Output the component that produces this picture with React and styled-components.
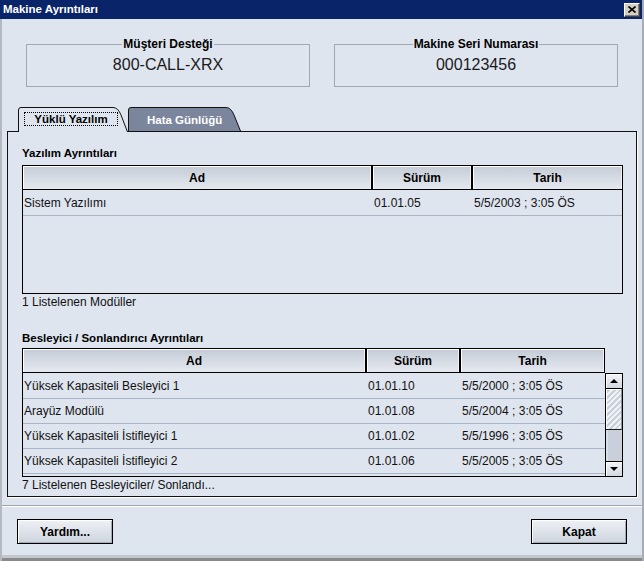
import React from "react";
import styled, { createGlobalStyle } from "styled-components";

const BG = "#dfe5ef";
const FONT = `"Liberation Sans", Arial, sans-serif`;

const GlobalStyle = createGlobalStyle`
  html, body {
    margin: 0;
    padding: 0;
    background: ${BG};
  }
  body {
    font-family: ${FONT};
    color: #000;
  }
`;

const Window = styled.div`
  width: 644px;
  height: 561px;
  box-sizing: border-box;
  display: flex;
  flex-direction: column;
  background: ${BG};
  border-right: 2px solid #a8adb5;
`;

const TitleBar = styled.div`
  flex: 0 0 19px;
  height: 19px;
  box-sizing: border-box;
  padding: 0 2px 0 3px;
  background: #0a246a;
  display: flex;
  align-items: center;
  justify-content: space-between;
`;

const Title = styled.span`
  color: #fff;
  font: bold 11.5px/13px ${FONT};
`;

const CloseButton = styled.button`
  width: 16px;
  height: 14px;
  padding: 0;
  margin: 0;
  box-sizing: border-box;
  background: #d4d0c8;
  border: 1px solid;
  border-color: #fff #404040 #404040 #fff;
  box-shadow: inset -1px -1px 0 #808080;
  display: flex;
  align-items: center;
  justify-content: center;
`;

const Body = styled.div`
  flex: 1;
  display: flex;
  flex-direction: column;
  border-left: 2px solid #b4b9c1;
  box-shadow: inset 0 -3px 0 #8a8a8a, inset 0 -6px 0 #c3c7cd;
`;

const InfoRow = styled.div`
  display: flex;
  gap: 24px;
  padding: 0 24px;
  margin-top: 18px;
`;

const InfoBox = styled.fieldset`
  flex: 0 0 284px;
  height: 50px;
  box-sizing: border-box;
  margin: 0;
  padding: 0;
  min-width: 0;
  border: 1px solid #a2a8b1;
`;

const InfoLegend = styled.legend`
  margin: 0 auto;
  padding: 0 1px;
  font: bold 12px/14px ${FONT};
`;

const InfoValue = styled.div`
  padding-top: 5px;
  text-align: center;
  font: 16px/18px ${FONT};
  color: #1a1a1a;
`;

const TabArea = styled.div`
  padding: 0 5px;
  display: flex;
  flex-direction: column;
`;

const TabStrip = styled.div`
  display: flex;
  align-items: flex-start;
  height: 24px;
  margin: 20px 0 0 11px;
  position: relative;
  z-index: 1;
`;

const Tab = styled.div`
  position: relative;
  flex: 0 0 ${(p) => p.$w}px;
  height: ${(p) => (p.$active ? 25 : 24)}px;
  font: bold 11.5px/14px ${FONT};
  color: ${(p) => (p.$active ? "#000" : "#fff")};
`;

const TabShape = styled.svg`
  position: absolute;
  left: 0;
  top: 0;
`;

const TabLabel = styled.div`
  position: relative;
  box-sizing: border-box;
  margin: ${(p) => (p.$active ? "5px 0 0 6px" : "6px 0 0 19px")};
  width: ${(p) => (p.$active ? "94px" : "auto")};
  height: 14px;
  line-height: ${(p) => (p.$active ? 12 : 14)}px;
  text-align: ${(p) => (p.$active ? "center" : "left")};
  border: ${(p) => (p.$active ? "1px dotted #000" : "none")};
`;

const Panel = styled.div`
  height: 366px;
  box-sizing: border-box;
  border: 1px solid #111;
  box-shadow: 1px 1px 0 #fff;
  padding: 14px 13px 0 14px;
  display: flex;
  flex-direction: column;
`;

const SectionLabel = styled.div`
  font: bold 11.5px/14px ${FONT};
  margin-top: ${(p) => p.$mt || 0}px;
`;

const Caption = styled.div`
  font: 12px/16px ${FONT};
  color: #111;
  white-space: nowrap;
`;

const Table = styled.div`
  margin-top: ${(p) => p.$mt}px;
  height: 129px;
  box-sizing: border-box;
  display: flex;
  flex-direction: column;
  border: ${(p) => (p.$pane ? "none" : "1px solid #000")};
`;

const HeadRow = styled.div`
  display: flex;
  box-sizing: border-box;
  height: ${(p) => (p.$pane ? 25 : 24)}px;
  width: ${(p) => (p.$pane ? "583px" : "auto")};
  border-bottom: 1px solid #000;
  ${(p) => p.$pane && "border: 1px solid #000;"}
`;

const HeadCell = styled.div`
  flex: ${(p) => (p.$w ? `0 0 ${p.$w}px` : "1")};
  box-sizing: border-box;
  border-left: ${(p) => (p.$first ? "none" : "1px solid #000")};
  border-right: ${(p) => (p.$last ? "none" : "1px solid #000")};
  background: linear-gradient(#c4cbd6 0%, #d3d9e2 45%, #e4e8ef 100%);
  box-shadow: inset 1px 1px 0 #fff, inset -1px 0 0 #eef1f5;
  display: flex;
  align-items: center;
  justify-content: center;
  font: bold 12px/14px ${FONT};
`;

const PaneBody = styled.div`
  flex: 1;
  display: flex;
  border: 1px solid #000;
  border-top: none;
  min-height: 0;
`;

const Rows = styled.div`
  flex: 1;
  overflow: hidden;
  padding-top: ${(p) => (p.$pane ? 1 : 0)}px;
`;

const Row = styled.div`
  display: flex;
  align-items: center;
  box-sizing: border-box;
  height: ${(p) => p.$h}px;
  border-bottom: 1px solid #a7b5c8;
  font: 12px/14px ${FONT};
  color: #111;
`;

const Cell = styled.div`
  flex: ${(p) => (p.$w ? `0 0 ${p.$w}px` : "1")};
  box-sizing: border-box;
  padding-left: ${(p) => (p.$first ? 1 : 2)}px;
  white-space: nowrap;
  overflow: hidden;
`;

const ScrollBar = styled.div`
  flex: 0 0 17px;
  box-sizing: border-box;
  border-left: 1px solid #000;
  display: flex;
  flex-direction: column;
`;

const ArrowButton = styled.div`
  flex: 0 0 ${(p) => p.$h}px;
  box-sizing: border-box;
  border-top: 1px solid #000;
  border-bottom: ${(p) => (p.$up ? "1px solid #000" : "none")};
  background: linear-gradient(#f3f5f8, #d2d8e1);
  box-shadow: inset 1px 1px 0 #fff;
  display: flex;
  align-items: center;
  justify-content: center;
`;

const Thumb = styled.div`
  flex: 0 0 41px;
  box-sizing: border-box;
  border-bottom: 1px solid #1a1a1a;
  border-right: 1px solid #8e97a6;
  background: repeating-linear-gradient(
    135deg,
    #eef1f5 0px,
    #eef1f5 2px,
    #c9cfd9 2px,
    #c9cfd9 4px
  );
  box-shadow: inset 1px 1px 0 #fff;
`;

const Track = styled.div`
  flex: 1;
  background: #c9d0db;
  box-shadow: inset 2px 0 0 #d8dee7;
`;

const Separator = styled.div`
  margin-top: 8px;
  height: 1px;
  background: #9fa6b0;
  border-bottom: 1px solid #fff;
`;

const ButtonRow = styled.div`
  display: flex;
  justify-content: space-between;
  padding: 0 15px;
  margin-top: 12px;
`;

const Button = styled.button`
  width: 96px;
  height: 25px;
  padding: 0;
  box-sizing: border-box;
  border: 1px solid #000;
  background: linear-gradient(#eef1f5, #cdd4de);
  box-shadow: inset 1px 1px 0 #fff, inset -1px -1px 0 #a3acb9;
  font: bold 12px/14px ${FONT};
  color: #000;
`;

const softwareCols = [349, 100, null];
const feederCols = [343, 94, null];

const software = [["Sistem Yazılımı", "01.01.05", "5/5/2003 ; 3:05 ÖS"]];

const feeders = [
  ["Yüksek Kapasiteli Besleyici 1", "01.01.10", "5/5/2000 ; 3:05 ÖS"],
  ["Arayüz Modülü", "01.01.08", "5/5/2004 ; 3:05 ÖS"],
  ["Yüksek Kapasiteli İstifleyici 1", "01.01.02", "5/5/1996 ; 3:05 ÖS"],
  ["Yüksek Kapasiteli İstifleyici 2", "01.01.06", "5/5/2005 ; 3:05 ÖS"],
];

const headers = ["Ad", "Sürüm", "Tarih"];

function TabItem({ label, active, width }) {
  const h = active ? 25 : 24;
  const W = width;
  const outline = `M0.5 ${h} V3 Q0.5 0.5 3 0.5 H${W - 15} Q${W - 10} 0.5 ${W - 7} 8 L${W - 0.5} ${h}`;
  return (
    <Tab $w={W} $active={active}>
      <TabShape width={W} height={h}>
        <path d={`${outline} Z`} fill={active ? BG : "#7b869d"} />
        <path d={outline} fill="none" stroke="#111" strokeWidth="1" />
      </TabShape>
      <TabLabel $active={active}>{label}</TabLabel>
    </Tab>
  );
}

function Header({ cols, pane }) {
  return (
    <HeadRow $pane={pane}>
      {headers.map((h, i) => (
        <HeadCell key={h} $w={cols[i]} $first={i === 0} $last={i === headers.length - 1}>
          {h}
        </HeadCell>
      ))}
    </HeadRow>
  );
}

function DataRow({ cells, cols, h }) {
  return (
    <Row $h={h}>
      {cells.map((c, i) => (
        <Cell key={i} $w={cols[i]} $first={i === 0}>
          {c}
        </Cell>
      ))}
    </Row>
  );
}

export default function App() {
  return (
    <>
      <GlobalStyle />
      <Window>
        <TitleBar>
          <Title>Makine Ayrıntıları</Title>
          <CloseButton aria-label="Kapat">
            <svg width="8" height="7" viewBox="0 0 8 7">
              <path d="M0.5 0.5 L7.5 6.5 M7.5 0.5 L0.5 6.5" stroke="#000" strokeWidth="1.6" />
            </svg>
          </CloseButton>
        </TitleBar>
        <Body>
          <InfoRow>
            <InfoBox>
              <InfoLegend>Müşteri Desteği</InfoLegend>
              <InfoValue>800-CALL-XRX</InfoValue>
            </InfoBox>
            <InfoBox>
              <InfoLegend>Makine Seri Numarası</InfoLegend>
              <InfoValue>000123456</InfoValue>
            </InfoBox>
          </InfoRow>

          <TabArea>
            <TabStrip>
              <TabItem label="Yüklü Yazılım" active width={110} />
              <TabItem label="Hata Günlüğü" width={113} />
            </TabStrip>
            <Panel>
              <SectionLabel>Yazılım Ayrıntıları</SectionLabel>
              <Table $mt={5}>
                <Header cols={softwareCols} />
                <Rows>
                  {software.map((r) => (
                    <DataRow key={r[0]} cells={r} cols={softwareCols} h={26} />
                  ))}
                </Rows>
              </Table>
              <Caption>1 Listelenen Modüller</Caption>

              <SectionLabel $mt={21}>Besleyici / Sonlandırıcı Ayrıntıları</SectionLabel>
              <Table $mt={3} $pane>
                <Header cols={feederCols} pane />
                <PaneBody>
                  <Rows $pane>
                    {feeders.map((r) => (
                      <DataRow key={r[0]} cells={r} cols={feederCols} h={25} />
                    ))}
                  </Rows>
                  <ScrollBar>
                    <ArrowButton $up $h={16}>
                      <svg width="8" height="4" viewBox="0 0 8 4">
                        <polygon points="0,4 8,4 4,0" fill="#000" />
                      </svg>
                    </ArrowButton>
                    <Thumb />
                    <Track />
                    <ArrowButton $h={15}>
                      <svg width="8" height="4" viewBox="0 0 8 4">
                        <polygon points="0,0 8,0 4,4" fill="#000" />
                      </svg>
                    </ArrowButton>
                  </ScrollBar>
                </PaneBody>
              </Table>
              <Caption>7 Listelenen Besleyiciler/ Sonlandı...</Caption>
            </Panel>
          </TabArea>

          <Separator />
          <ButtonRow>
            <Button>Yardım...</Button>
            <Button>Kapat</Button>
          </ButtonRow>
        </Body>
      </Window>
    </>
  );
}
